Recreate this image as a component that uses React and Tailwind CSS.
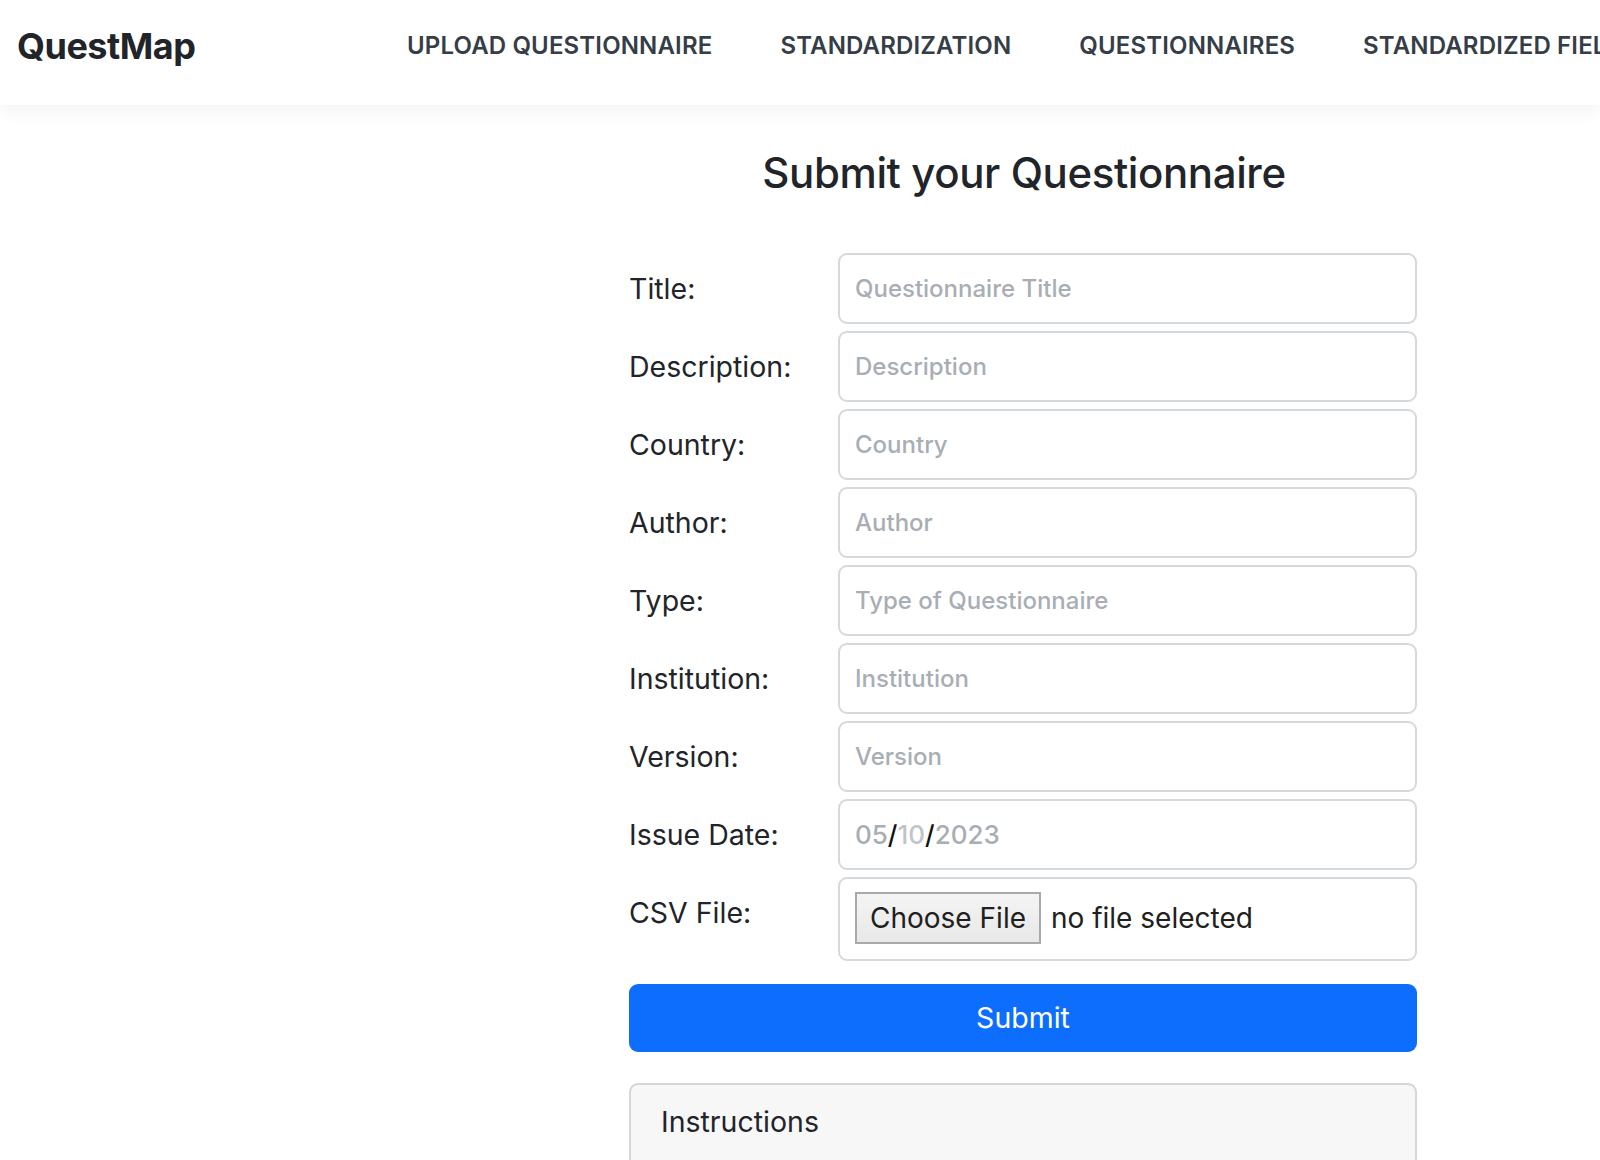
import React from 'react';

const NAV_LINKS = ['UPLOAD QUESTIONNAIRE', 'STANDARDIZATION', 'QUESTIONNAIRES', 'STANDARDIZED FIELDS'];

const FIELDS = [
  { label: 'Title:', placeholder: 'Questionnaire Title' },
  { label: 'Description:', placeholder: 'Description' },
  { label: 'Country:', placeholder: 'Country' },
  { label: 'Author:', placeholder: 'Author' },
  { label: 'Type:', placeholder: 'Type of Questionnaire' },
  { label: 'Institution:', placeholder: 'Institution' },
  { label: 'Version:', placeholder: 'Version' },
];

const font = { fontFamily: 'Inter, "Liberation Sans", Arial, sans-serif' };

const Header = () => (
  <header className="relative z-10 h-[105px] bg-white flex items-center pl-[17px] pb-[14px] shadow-[0_6px_18px_rgba(0,0,0,0.05)] overflow-hidden whitespace-nowrap">
    <a className="text-[36px] font-bold text-[#212529] tracking-[-0.5px] w-[390px] shrink-0">QuestMap</a>
    <nav className="flex gap-[68px]">
      {NAV_LINKS.map(link => (
        <a key={link} className="text-[24px] font-semibold text-[#353e47] tracking-[0.15px]">{link}</a>
      ))}
    </nav>
  </header>
);

const FieldRow = ({ label, children, tall }) => (
  <div className="flex">
    <label className="w-[209px] shrink-0 pt-[18px] text-[28.5px] leading-[36px] text-[#212529]">{label}</label>
    <div className={`flex-1 border-2 border-[#d6d9dc] rounded-[9px] bg-white flex items-center px-[15px] ${tall ? 'h-[84px]' : 'h-[71px]'}`}>
      {children}
    </div>
  </div>
);

export default function App() {
  return (
    <div className="min-h-screen bg-white" style={font}>
      <Header />
      <main className="ml-[629px] w-[788px] pt-[40px]">
        <h1 className="text-center text-[42px] font-medium text-[#212529] tracking-[-0.4px] leading-[56px] mb-[52px] pl-[2px]">
          Submit your Questionnaire
        </h1>
        <form className="flex flex-col gap-[7px]">
          {FIELDS.map(f => (
            <FieldRow key={f.label} label={f.label}>
              <input
                type="text"
                placeholder={f.placeholder}
                className="w-full bg-transparent outline-none text-[24px] font-medium text-[#212529] placeholder:text-[#a8aeb4]"
              />
            </FieldRow>
          ))}
          <FieldRow label="Issue Date:">
            <span className="text-[26px] font-medium text-[#a8aeb4]">
              05<span className="text-[#111]">/</span><span className="text-[#c0c4c8]">10</span><span className="text-[#111]">/</span>2023
            </span>
          </FieldRow>
          <FieldRow label="CSV File:" tall>
            <button
              type="button"
              className="h-[52px] px-[13px] -mt-[2px] border-2 border-[#a9a9a9] bg-gradient-to-b from-[#f4f4f4] to-[#e8e8e8] text-[28px] text-[#202020] leading-none"
            >
              Choose File
            </button>
            <span className="ml-[10px] -mt-[2px] text-[28px] text-[#202020]">no file selected</span>
          </FieldRow>
          <button
            type="button"
            className="mt-[16px] h-[68px] w-full rounded-[9px] bg-[#0d6efd] text-white text-[28.5px]"
          >
            Submit
          </button>
        </form>
        <div className="mt-[31px] h-[90px] rounded-t-[9px] border-2 border-b-0 border-[#d6d6d6] bg-[#f7f7f7] pt-[19px] pl-[30px] text-[28.5px] leading-[36px] text-[#212529]">
          Instructions
        </div>
      </main>
    </div>
  );
}
